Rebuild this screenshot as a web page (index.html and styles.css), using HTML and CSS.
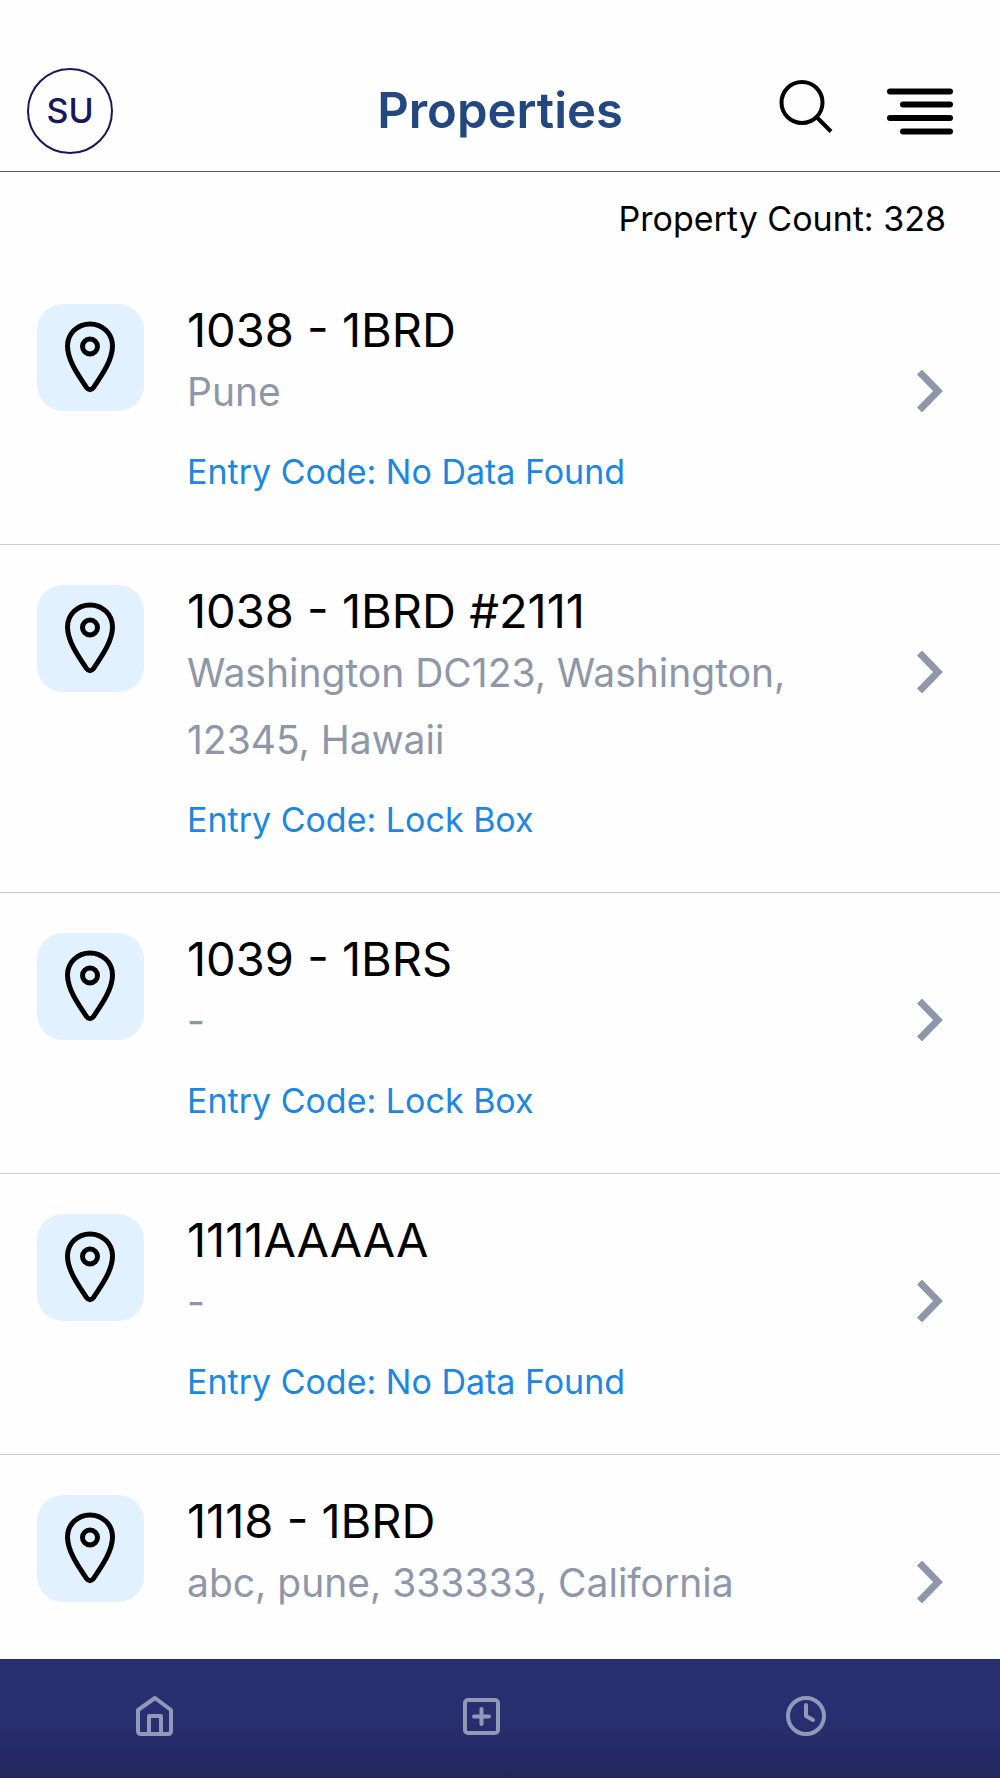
FILE: index.html
```html
<!DOCTYPE html>
<html lang="en">
<head>
    <meta charset="UTF-8">
    <meta name="viewport" content="width=device-width, initial-scale=1.0">
    <title>Properties</title>
    <link rel="stylesheet" href="styles.css">
</head>
<body>
    <!-- shared icons -->
    <svg class="sprite" aria-hidden="true">
        <symbol id="pin" viewBox="0 0 54 76">
            <path d="M26 4C13.500 4 3.500 13.500 3.500 26C3.500 40 14 55 22.500 67.500Q26 72 29.500 67.500C38 55 48.500 40 48.500 26C48.500 13.500 38.500 4 26 4Z"/>
            <circle cx="26" cy="26.500" r="7.500"/>
        </symbol>
        <symbol id="chevron" viewBox="0 0 26 42">
            <path d="M2.500 2L21 21L2.500 40"/>
        </symbol>
    </svg>

    <div class="app">
        <header class="header">
            <button class="avatar" type="button">SU</button>
            <h1 class="title">Properties</h1>
            <div class="actions">
                <button class="icon-button" type="button" aria-label="Search">
                    <svg width="54" height="62" viewBox="0 0 54 62" fill="none" stroke="#000" stroke-width="4">
                        <circle cx="23" cy="22.500" r="20.500"/>
                        <path d="M37.500 37L52 51.500"/>
                    </svg>
                </button>
                <button class="icon-button" type="button" aria-label="Menu">
                    <svg width="66" height="48" viewBox="0 0 66 48" fill="none" stroke="#000" stroke-width="6" stroke-linecap="round">
                        <path d="M3 4.500H63M16 17.500H63M3 31H63M16 44.500H63"/>
                    </svg>
                </button>
            </div>
        </header>

        <p class="count">Property Count: 328</p>

        <main class="list">
            <a class="property" href="#">
                <span class="pin-box"><svg class="pin"><use href="#pin"/></svg></span>
                <span class="info">
                    <span class="name">1038 - 1BRD</span>
                    <span class="address">Pune</span>
                    <span class="code">Entry Code: No Data Found</span>
                </span>
                <svg class="chevron"><use href="#chevron"/></svg>
            </a>
            <a class="property" href="#">
                <span class="pin-box"><svg class="pin"><use href="#pin"/></svg></span>
                <span class="info">
                    <span class="name">1038 - 1BRD #2111</span>
                    <span class="address">Washington DC123, Washington, 12345, Hawaii</span>
                    <span class="code">Entry Code: Lock Box</span>
                </span>
                <svg class="chevron"><use href="#chevron"/></svg>
            </a>
            <a class="property" href="#">
                <span class="pin-box"><svg class="pin"><use href="#pin"/></svg></span>
                <span class="info">
                    <span class="name">1039 - 1BRS</span>
                    <span class="address">-</span>
                    <span class="code">Entry Code: Lock Box</span>
                </span>
                <svg class="chevron"><use href="#chevron"/></svg>
            </a>
            <a class="property" href="#">
                <span class="pin-box"><svg class="pin"><use href="#pin"/></svg></span>
                <span class="info">
                    <span class="name">1111AAAAA</span>
                    <span class="address">-</span>
                    <span class="code">Entry Code: No Data Found</span>
                </span>
                <svg class="chevron"><use href="#chevron"/></svg>
            </a>
            <a class="property" href="#">
                <span class="pin-box"><svg class="pin"><use href="#pin"/></svg></span>
                <span class="info">
                    <span class="name">1118 - 1BRD</span>
                    <span class="address">abc, pune, 333333, California</span>
                </span>
                <svg class="chevron"><use href="#chevron"/></svg>
            </a>
        </main>

        <nav class="tabs">
            <a class="tab" href="#" aria-label="Home">
                <svg width="40" height="40" viewBox="0 0 40 40">
                    <path d="M4 14L21 2L37 14V35Q37 38 34 38H7Q4 38 4 35ZM15 38V20H27V38"/>
                </svg>
            </a>
            <a class="tab" href="#" aria-label="Add">
                <svg width="40" height="40" viewBox="0 0 40 40">
                    <rect x="5" y="4" width="33" height="33" rx="3"/>
                    <path d="M21.500 13V28M14 20.500H29"/>
                </svg>
            </a>
            <a class="tab" href="#" aria-label="History">
                <svg width="40" height="40" viewBox="0 0 40 40">
                    <circle cx="20" cy="20" r="18"/>
                    <path d="M20 9V20L27 24"/>
                </svg>
            </a>
        </nav>
    </div>
</body>
</html>
```

FILE: styles.css
```css
* {
    box-sizing: border-box;
}
body {
    margin: 0;
    font-family: Inter, "Liberation Sans", sans-serif;
    background-color: #fefefe;
    color: #000;
}
a {
    text-decoration: none;
}
button {
    padding: 0;
    background: none;
    border: none;
    color: inherit;
    font-family: inherit;
    cursor: pointer;
}
svg {
    display: block;
    flex-shrink: 0;
}
.sprite {
    display: none;
}
.app {
    display: flex;
    flex-direction: column;
    height: 100vh;
}

/* header */
.header {
    display: grid;
    grid-template-columns: 1fr auto 1fr;
    align-items: center;
    padding: 68px 27px 17px;
    border-bottom: 1px solid #555;
}
.avatar {
    width: 86px;
    height: 86px;
    padding-bottom: 2px;
    border: 2px solid #15185c;
    border-radius: 50%;
    color: #15185c;
    font-size: 34px;
    font-weight: 500;
}
.title {
    margin: 0;
    color: #22487f;
    font-size: 49px;
    font-weight: 600;
    line-height: 56px;
}
.actions {
    display: flex;
    justify-content: flex-end;
    align-items: center;
    gap: 54px;
    padding-right: 20px;
}

/* list */
.count {
    margin: 0;
    padding: 27px 54px 25px;
    font-size: 34px;
    line-height: 40px;
    text-align: right;
}
.list {
    flex: 1;
    min-height: 0;
    overflow: auto;
}
.property {
    display: flex;
    align-items: flex-start;
    padding: 40px 57px 52px 37px;
    border-bottom: 1px solid #ccc;
}
.property:last-child {
    border-bottom: none;
}
.pin-box {
    display: flex;
    flex-shrink: 0;
    align-items: center;
    justify-content: center;
    width: 107px;
    height: 107px;
    border-radius: 26px;
    background-color: #e2f1ff;
}
.pin {
    width: 54px;
    height: 76px;
    fill: none;
    stroke: #000;
    stroke-width: 5;
}
.info {
    display: flex;
    flex: 1;
    flex-direction: column;
    padding: 0 100px 0 43px;
}
.name {
    color: #000;
    font-size: 47px;
    line-height: 52px;
}
.address {
    margin-top: 2px;
    color: #8e96a9;
    font-size: 39px;
    line-height: 67px;
}
.code {
    margin-top: 27px;
    color: #1c86e3;
    font-size: 34px;
    line-height: 40px;
}
.chevron {
    width: 26px;
    height: 42px;
    margin-top: 66px;
    fill: none;
    stroke: #8e96a9;
    stroke-width: 7;
}

/* bottom tabs */
.tabs {
    display: flex;
    justify-content: space-between;
    padding: 37px 174px 42px 134px;
    background: linear-gradient(#282f70 50%, #22275c);
}
.tab svg {
    fill: none;
    stroke: #8f99b8;
    stroke-width: 4;
    stroke-linecap: round;
    stroke-linejoin: round;
}
```
